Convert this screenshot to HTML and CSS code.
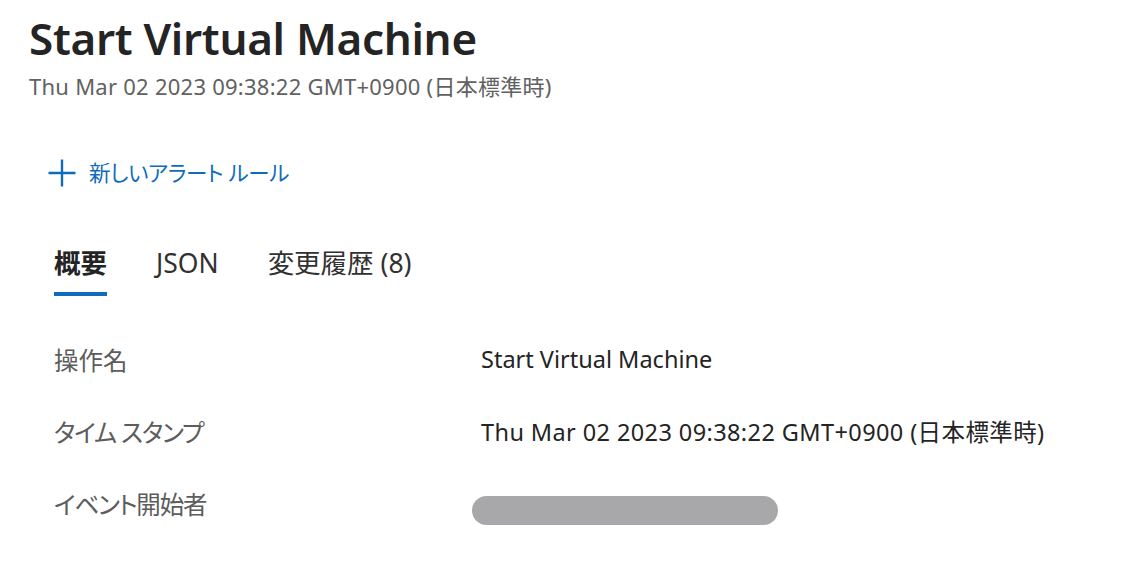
FILE: index.html
```html
<!DOCTYPE html>
<html lang="ja">
<head>
<meta charset="utf-8">
<link rel="stylesheet" href="styles.css">
</head>
<body>
<div class="page">
  <header class="head">
    <h1 class="title">Start Virtual Machine</h1>
    <div class="subtitle">Thu Mar 02 2023 09:38:22 GMT+0900 (日本標準時)</div>
  </header>
  <div class="toolbar">
    <button class="cmd">
      <svg class="plus" width="30" height="30" viewBox="0 0 30 30"><path d="M15 1.5v27M1.5 15h27" stroke="#0f6cbd" stroke-width="2.4" fill="none"/></svg>
      <span>新しいアラート ルール</span>
    </button>
  </div>
  <nav class="tabs">
    <div class="tab active">概要</div>
    <div class="tab">JSON</div>
    <div class="tab">変更履歴 (8)</div>
  </nav>
  <div class="props">
    <div class="row"><div class="label">操作名</div><div class="value">Start Virtual Machine</div></div>
    <div class="row"><div class="label kana">タイム スタンプ</div><div class="value ts">Thu Mar 02 2023 09:38:22 GMT+0900 (日本標準時)</div></div>
    <div class="row"><div class="label kana">イベント開始者</div><div class="value"><span class="redact"></span></div></div>
  </div>
</div>
</body>
</html>
```
FILE: styles.css
```css
* { box-sizing: border-box; }
html, body { margin: 0; background: #fff; }
body {
  font-family: "Noto Sans", "Noto Sans CJK JP", sans-serif;
  font-feature-settings: "palt" 1;
  color: #242424;
}
.page { padding: 10px 0 0 29px; }
.title {
  margin: 0;
  font-size: 44px;
  font-weight: 600;
  line-height: 56px;
  color: #242424;
  letter-spacing: -0.3px;
}
.subtitle {
  font-size: 22px;
  line-height: 30px;
  color: #616161;
  margin-top: 5px;
  letter-spacing: 0.25px;
}
.toolbar { margin-top: 57px; padding-left: 18px; }
.cmd {
  display: flex;
  align-items: center;
  gap: 12px;
  background: none;
  border: 0;
  padding: 0;
  font: inherit;
  font-size: 21.5px;
  line-height: 30px;
  letter-spacing: -0.3px;
  color: #0f6cbd;
}
.plus { display: block; }
.tabs {
  display: flex;
  gap: 49px;
  margin-top: 57px;
  padding-left: 25px;
}
.tab {
  font-size: 26.5px;
  line-height: 36px;
  color: #323130;
  padding-bottom: 11px;
  border-bottom: 4px solid transparent;
}
.tab.active {
  font-weight: 700;
  color: #242424;
  border-bottom-color: #0f6cbd;
}
.props { margin-top: 27px; padding-left: 25px; }
.row {
  display: flex;
  align-items: center;
  height: 72px;
}
.label {
  width: 427px;
  font-size: 24.5px;
  color: #5c5c5c;
}
.label.kana { letter-spacing: -1.2px; }
.value {
  font-size: 23.5px;
  color: #242424;
}
.value.ts { letter-spacing: 0.4px; }
.redact {
  display: block;
  width: 306px;
  height: 29px;
  border-radius: 15px;
  background: #a8a8aa;
  margin-left: -9px;
  margin-top: 14px;
}
```
